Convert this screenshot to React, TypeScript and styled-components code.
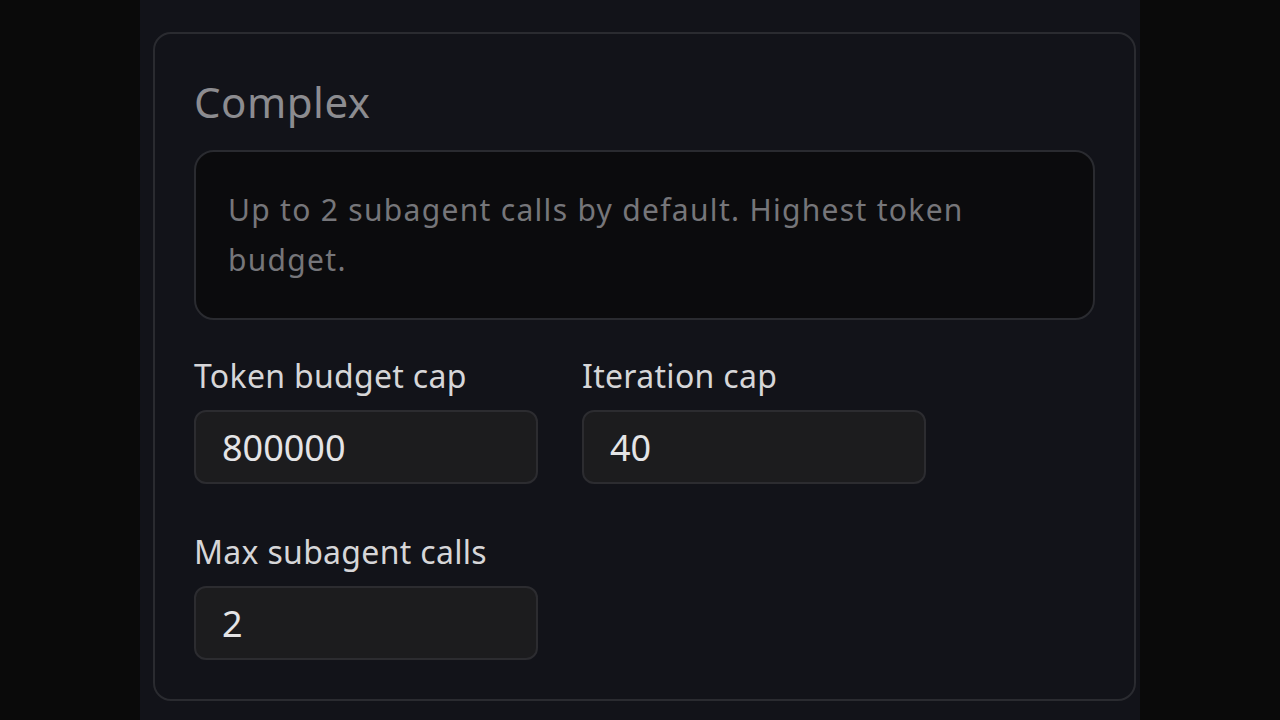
import styled, { createGlobalStyle } from "styled-components"

const GlobalStyle = createGlobalStyle`
  html, body {
    margin: 0;
    padding: 0;
    background: #0a0a0a;
    font-family: "Noto Sans", "Liberation Sans", sans-serif;
  }
`

const Panel = styled.div`
  width: 1000px;
  height: 720px;
  margin: 0 auto;
  background: #121319;
  box-sizing: border-box;
  padding: 32px 4px 0 13px;
  overflow: hidden;
`

const Card = styled.section`
  border: 2px solid #2a2b30;
  border-radius: 18px;
  padding: 40px 39px 39px;
  display: flex;
  flex-direction: column;
`

const Heading = styled.h2`
  margin: 0;
  font-size: 42px;
  line-height: 56px;
  font-weight: 400;
  letter-spacing: 0.5px;
  color: #8c8c90;
`

const Description = styled.div`
  margin-top: 20px;
  background: #0b0b0d;
  border: 2px solid #2a2b30;
  border-radius: 20px;
  padding: 33px 32px;
  font-size: 30px;
  line-height: 50px;
  letter-spacing: 1.3px;
  color: #76767a;
`

const FieldGrid = styled.div`
  margin-top: 38px;
  display: grid;
  grid-template-columns: 344px 344px;
  column-gap: 44px;
  row-gap: 50px;
`

const Field = styled.label`
  display: flex;
  flex-direction: column;
  gap: 16px;
`

const LabelText = styled.span`
  font-size: 32px;
  line-height: 36px;
  letter-spacing: 0.3px;
  color: #d6d6d8;
`

const Input = styled.input`
  box-sizing: border-box;
  width: 100%;
  height: 74px;
  background: #1c1c1e;
  border: 2px solid #2c2c30;
  border-radius: 12px;
  padding: 0 26px;
  font-family: inherit;
  font-size: 36px;
  color: #e4e4e6;
  outline: none;
`

const fields = [
  { label: "Token budget cap", value: "800000" },
  { label: "Iteration cap", value: "40" },
  { label: "Max subagent calls", value: "2" },
]

export default function App() {
  return (
    <>
      <GlobalStyle />
      <Panel>
        <Card>
          <Heading>Complex</Heading>
          <Description>Up to 2 subagent calls by default. Highest token budget.</Description>
          <FieldGrid>
            {fields.map((f) => (
              <Field key={f.label}>
                <LabelText>{f.label}</LabelText>
                <Input defaultValue={f.value} />
              </Field>
            ))}
          </FieldGrid>
        </Card>
      </Panel>
    </>
  )
}
